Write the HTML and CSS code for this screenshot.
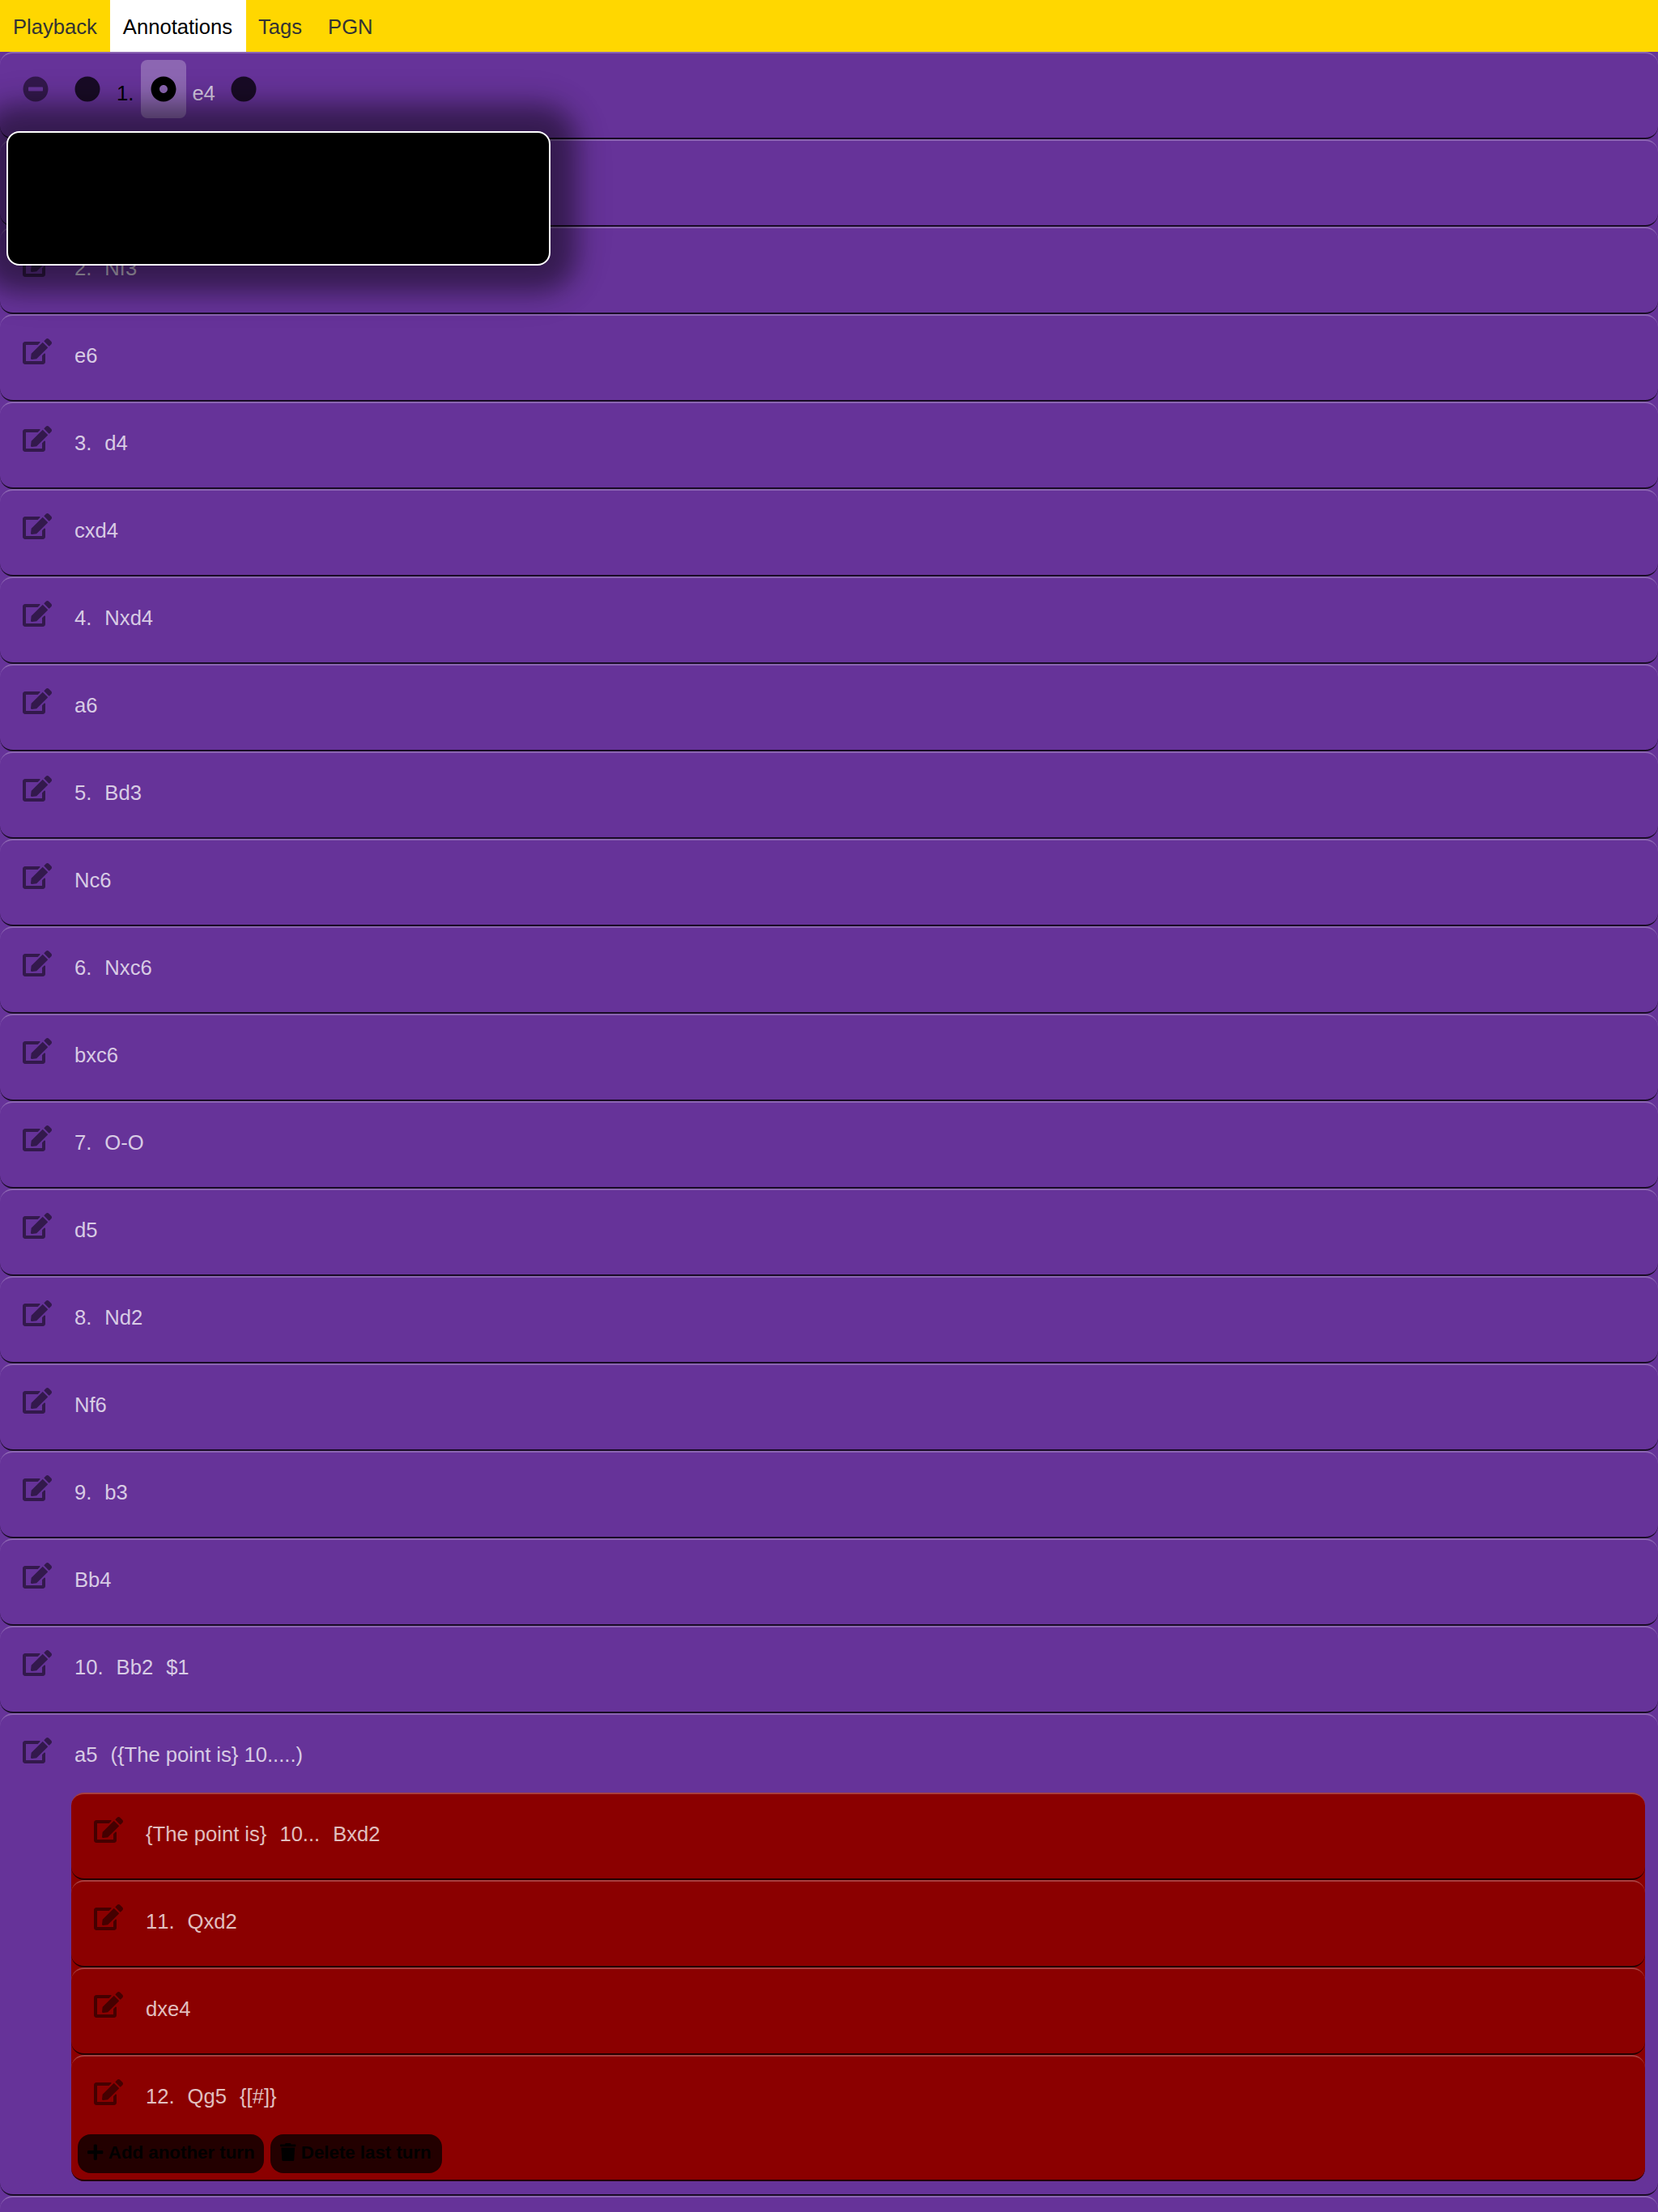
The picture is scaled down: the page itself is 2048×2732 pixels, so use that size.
FILE: index.html
```html
<!DOCTYPE html>
<html lang="en">
<head>
<meta charset="utf-8">
<title>Annotations</title>
<link rel="stylesheet" href="styles.css">
</head>
<body>
<svg class="sprite" aria-hidden="true">
  <symbol id="edit" viewBox="0 0 576 512"><path d="M402.6 83.2l90.2 90.2c3.8 3.8 3.8 10 0 13.8L274.4 405.6l-92.8 10.3c-12.4 1.4-22.9-9.1-21.5-21.5l10.3-92.8L388.8 83.2c3.8-3.8 10-3.8 13.8 0zm162-22.9l-48.8-48.8c-15.2-15.2-39.9-15.2-55.2 0l-35.4 35.4c-3.8 3.8-3.8 10 0 13.8l90.2 90.2c3.8 3.8 10 3.8 13.8 0l35.4-35.4c15.2-15.3 15.2-40 0-55.2zM384 346.2V448H64V128h229.8c3.2 0 6.2-1.3 8.5-3.5l40-40c7.6-7.6 2.2-20.5-8.5-20.5H48C21.5 64 0 85.5 0 112v352c0 26.5 21.5 48 48 48h352c26.5 0 48-21.5 48-48V306.2c0-10.7-12.9-16-20.5-8.5l-40 40c-2.2 2.3-3.5 5.3-3.5 8.5z"/></symbol>
  <symbol id="minus-circle" viewBox="0 0 512 512"><path d="M256 8C119 8 8 119 8 256s111 248 248 248 248-111 248-248S393 8 256 8zM124 296c-6.6 0-12-5.4-12-12v-56c0-6.6 5.4-12 12-12h264c6.6 0 12 5.4 12 12v56c0 6.6-5.4 12-12 12H124z"/></symbol>
  <symbol id="circle" viewBox="0 0 512 512"><circle cx="256" cy="256" r="248"/></symbol>
  <symbol id="dot-circle" viewBox="0 0 512 512"><path d="M256 8C119 8 8 119 8 256s111 248 248 248 248-111 248-248S393 8 256 8zm80 248c0 44.1-35.9 80-80 80s-80-35.9-80-80 35.9-80 80-80 80 35.9 80 80z"/></symbol>
  <symbol id="plus" viewBox="0 0 448 512"><path d="M416 208H272V64c0-17.67-14.33-32-32-32h-32c-17.67 0-32 14.33-32 32v144H32c-17.67 0-32 14.33-32 32v32c0 17.67 14.33 32 32 32h144v144c0 17.67 14.33 32 32 32h32c17.67 0 32-14.33 32-32V304h144c17.67 0 32-14.33 32-32v-32c0-17.67-14.33-32-32-32z"/></symbol>
  <symbol id="trash" viewBox="0 0 448 512"><path d="M432 32H312l-9.4-18.7A24 24 0 0 0 281.1 0H166.8a23.72 23.72 0 0 0-21.4 13.3L136 32H16A16 16 0 0 0 0 48v32a16 16 0 0 0 16 16h416a16 16 0 0 0 16-16V48a16 16 0 0 0-16-16zM53.2 467a48 48 0 0 0 47.9 45h245.8a48 48 0 0 0 47.9-45L416 128H32z"/></symbol>
</svg>
<nav class="tabs">
  <a class="tab">Playback</a>
  <a class="tab active">Annotations</a>
  <a class="tab">Tags</a>
  <a class="tab">PGN</a>
</nav>
<main class="moves">
  <div class="row editing">
    <div class="line">
      <span class="icon"><svg><use href="#minus-circle"/></svg></span>
      <div class="tokens">
        <span class="icon insert"><svg><use href="#circle"/></svg></span>
        <span class="token number">1.</span>
        <span class="icon insert selected"><svg><use href="#dot-circle"/></svg></span>
        <span class="token move">e4</span>
        <span class="icon insert"><svg><use href="#circle"/></svg></span>
      </div>
    </div>
    <div class="popup"></div>
  </div>
  <div class="row"><div class="line"></div></div>
  <div class="row"><div class="line"><span class="icon edit"><svg><use href="#edit"/></svg></span><div class="tokens"><span class="token">2.</span><span class="token">Nf3</span></div></div></div>
  <div class="row"><div class="line"><span class="icon edit"><svg><use href="#edit"/></svg></span><div class="tokens"><span class="token">e6</span></div></div></div>
  <div class="row"><div class="line"><span class="icon edit"><svg><use href="#edit"/></svg></span><div class="tokens"><span class="token">3.</span><span class="token">d4</span></div></div></div>
  <div class="row"><div class="line"><span class="icon edit"><svg><use href="#edit"/></svg></span><div class="tokens"><span class="token">cxd4</span></div></div></div>
  <div class="row"><div class="line"><span class="icon edit"><svg><use href="#edit"/></svg></span><div class="tokens"><span class="token">4.</span><span class="token">Nxd4</span></div></div></div>
  <div class="row"><div class="line"><span class="icon edit"><svg><use href="#edit"/></svg></span><div class="tokens"><span class="token">a6</span></div></div></div>
  <div class="row"><div class="line"><span class="icon edit"><svg><use href="#edit"/></svg></span><div class="tokens"><span class="token">5.</span><span class="token">Bd3</span></div></div></div>
  <div class="row"><div class="line"><span class="icon edit"><svg><use href="#edit"/></svg></span><div class="tokens"><span class="token">Nc6</span></div></div></div>
  <div class="row"><div class="line"><span class="icon edit"><svg><use href="#edit"/></svg></span><div class="tokens"><span class="token">6.</span><span class="token">Nxc6</span></div></div></div>
  <div class="row"><div class="line"><span class="icon edit"><svg><use href="#edit"/></svg></span><div class="tokens"><span class="token">bxc6</span></div></div></div>
  <div class="row"><div class="line"><span class="icon edit"><svg><use href="#edit"/></svg></span><div class="tokens"><span class="token">7.</span><span class="token">O-O</span></div></div></div>
  <div class="row"><div class="line"><span class="icon edit"><svg><use href="#edit"/></svg></span><div class="tokens"><span class="token">d5</span></div></div></div>
  <div class="row"><div class="line"><span class="icon edit"><svg><use href="#edit"/></svg></span><div class="tokens"><span class="token">8.</span><span class="token">Nd2</span></div></div></div>
  <div class="row"><div class="line"><span class="icon edit"><svg><use href="#edit"/></svg></span><div class="tokens"><span class="token">Nf6</span></div></div></div>
  <div class="row"><div class="line"><span class="icon edit"><svg><use href="#edit"/></svg></span><div class="tokens"><span class="token">9.</span><span class="token">b3</span></div></div></div>
  <div class="row"><div class="line"><span class="icon edit"><svg><use href="#edit"/></svg></span><div class="tokens"><span class="token">Bb4</span></div></div></div>
  <div class="row"><div class="line"><span class="icon edit"><svg><use href="#edit"/></svg></span><div class="tokens"><span class="token">10.</span><span class="token">Bb2</span><span class="token">$1</span></div></div></div>
  <div class="row">
    <div class="line"><span class="icon edit"><svg><use href="#edit"/></svg></span><div class="tokens"><span class="token">a5</span><span class="token">({The point is} 10.....)</span></div></div>
    <div class="variation">
      <div class="row"><div class="line"><span class="icon edit"><svg><use href="#edit"/></svg></span><div class="tokens"><span class="token">{The point is}</span><span class="token">10...</span><span class="token">Bxd2</span></div></div></div>
      <div class="row"><div class="line"><span class="icon edit"><svg><use href="#edit"/></svg></span><div class="tokens"><span class="token">11.</span><span class="token">Qxd2</span></div></div></div>
      <div class="row"><div class="line"><span class="icon edit"><svg><use href="#edit"/></svg></span><div class="tokens"><span class="token">dxe4</span></div></div></div>
      <div class="row">
        <div class="line"><span class="icon edit"><svg><use href="#edit"/></svg></span><div class="tokens"><span class="token">12.</span><span class="token">Qg5</span><span class="token">{[#]}</span></div></div>
        <div class="actions">
          <button class="action add"><svg><use href="#plus"/></svg>Add another turn</button>
          <button class="action delete"><svg><use href="#trash"/></svg>Delete last turn</button>
        </div>
      </div>
    </div>
  </div>
  <div class="row"><div class="line"></div></div>
</main>
</body>
</html>
```
FILE: styles.css
```css
* {
  box-sizing: border-box;
}

html,
body {
  margin: 0;
  height: 2732px;
  overflow: hidden;
}

body {
  background: rebeccapurple;
  font-family: "Liberation Sans", Arial, sans-serif;
  font-size: 25.6px;
}

.sprite {
  display: none;
}

svg {
  display: block;
  fill: currentColor;
}

.tabs {
  display: flex;
  height: 64px;
  background: gold;
}

.tab {
  padding: 1px 16px 0;
  line-height: 64px;
  color: #333;
}

.tab.active {
  width: 168px;
  background: #fff;
  color: #000;
}

.tab.active + .tab {
  padding-left: 15.2px;
}

.row {
  position: relative;
  padding-bottom: 8px;
  border-top: 2px solid rgba(255, 255, 255, 0.25);
  border-bottom: 2px solid rgba(0, 0, 0, 0.75);
  border-radius: 16px;
}

.line {
  display: flex;
  height: 96px;
  padding: 8px 16px 16px;
}

.tokens {
  display: flex;
  margin-left: 8px;
}

.token {
  padding: 5px 8px 0;
  line-height: 72px;
  white-space: pre;
  font-kerning: none;
  color: rgba(255, 255, 255, 0.75);
}

.token.number {
  width: 38px;
  color: #000;
}

.token.move {
  padding: 5px 8px 0 7.4px;
}

.icon {
  height: 72px;
  padding: 20px 12px;
  border-radius: 8px;
  color: rgba(0, 0, 0, 0.5);
}

.icon svg {
  width: 32px;
  height: 32px;
}

.icon.edit svg {
  width: 36px;
}

.icon.insert {
  padding: 20px 12.5px 20px 11.5px;
  color: rgba(0, 0, 0, 0.75);
}

.icon.selected {
  background: rgba(255, 255, 255, 0.25);
  color: #000;
}

.popup {
  position: absolute;
  z-index: 1;
  top: 96px;
  left: 8px;
  width: 672px;
  height: 166px;
  background: #000;
  border: 2px solid #fff;
  border-radius: 16px;
  box-shadow: 0 0 32px 32px rgba(0, 0, 0, 0.44), 0 0 56px 32px rgba(0, 0, 0, 0.08);
}

.variation {
  margin: 0 16px 8px 88px;
  background: darkred;
  border-radius: 16px;
}

.actions {
  display: flex;
  gap: 8px;
  padding-left: 8px;
}

.action {
  display: flex;
  align-items: center;
  height: 48px;
  padding: 0 0 3px 12px;
  border: 0;
  border-radius: 16px;
  background: rgba(0, 0, 0, 0.75);
  color: #000;
  font: bold 22.4px "Liberation Sans", Arial, sans-serif;
  letter-spacing: -0.05px;
  white-space: nowrap;
}

.action.add {
  width: 230px;
}

.action.delete {
  width: 212px;
}

.action svg {
  flex: none;
  width: 19.6px;
  height: 22.4px;
  margin: -1.5px 6.2px 0 0;
}
```
